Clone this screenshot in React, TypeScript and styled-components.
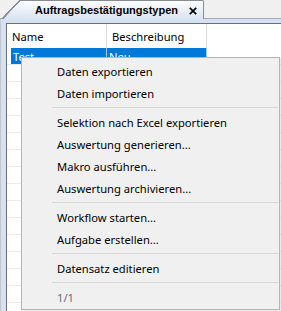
import styled, { createGlobalStyle } from "styled-components";

const Global = createGlobalStyle`
  html, body {
    margin: 0;
    padding: 0;
    background: #f0f0f0;
    overflow: hidden;
  }
  body {
    font-family: "Noto Sans", "Open Sans", sans-serif;
    font-size: 11.2px;
  }
`;

const Window = styled.div`
  width: 281px;
  height: 311px;
  display: flex;
  flex-direction: column;
  position: relative;
  overflow: hidden;
`;

const TabStrip = styled.div`
  height: 20px;
  display: flex;
  align-items: flex-end;
  border-bottom: 1px solid #a5a9b1;
  padding-left: 20px;
`;

const Tab = styled.div`
  position: relative;
  height: 18px;
  margin-bottom: -1px;
  padding: 0 6px 0 15px;
  display: flex;
  align-items: center;
  gap: 11px;
  border-top: 1px solid #868a93;
  border-right: 1px solid #868a93;
  border-top-right-radius: 2px;
  background: linear-gradient(to bottom, #fcfdfe, #d9e4f3);
  font-family: "Liberation Sans", Arial, sans-serif;
  font-weight: bold;
  font-size: 11px;
  color: #000;

  &::before {
    content: "";
    position: absolute;
    left: -18px;
    top: -1px;
    width: 18px;
    height: 19px;
    background: linear-gradient(
        to bottom right,
        #f0f0f0 47%,
        #868a93 48%,
        #868a93 53%,
        transparent 54%
      ),
      linear-gradient(to bottom, #fcfdfe, #d9e4f3);
  }
`;

const Close = styled.svg`
  width: 8px;
  height: 8px;
  margin-top: 1px;
`;

const Frame = styled.div`
  flex: 1;
  display: flex;
  background: #d6e2f2;
  border-left: 1px solid #c4c8cf;
  padding: 4px 0 0 5px;
`;

const Panel = styled.div`
  flex: 1;
  background: #fff;
  border-left: 1px solid #6b6e74;
  border-top: 1px solid #6b6e74;
`;

const Header = styled.div`
  display: flex;
  height: 24px;
`;

const HeadCell = styled.div`
  width: 94px;
  padding-left: 5px;
  border-right: 1px solid #dadada;
  display: flex;
  align-items: center;
  color: #000;
`;

const Row = styled.div`
  display: flex;
  height: 16px;
  padding-left: 4px;
  border-bottom: 1px solid #ececec;
`;

const Cell = styled.div<{ $selected?: boolean; $width: number }>`
  width: ${(p) => p.$width}px;
  padding-left: 2px;
  display: flex;
  align-items: center;
  border-right: 1px solid ${(p) => (p.$selected ? "#9cc7ef" : "transparent")};
  background: ${(p) => (p.$selected ? "#0078d7" : "transparent")};
  color: ${(p) => (p.$selected ? "#fff" : "#000")};
  white-space: nowrap;
  overflow: hidden;
`;

const Menu = styled.div`
  position: absolute;
  left: 21px;
  top: 57px;
  width: 257px;
  padding: 2px 0 1px;
  background: #f0f0f0;
  border: 1px solid #b4b4b4;
  box-shadow: 1px 1px 1px rgba(0, 0, 0, 0.08);
`;

const Item = styled.div<{ $disabled?: boolean }>`
  height: 22px;
  padding-left: 35px;
  display: flex;
  align-items: center;
  color: ${(p) => (p.$disabled ? "#6d6d6d" : "#000")};
  white-space: nowrap;
`;

const Separator = styled.div`
  height: 7px;
  display: flex;
  align-items: center;
  margin: 0 1px 0 30px;

  &::after {
    content: "";
    flex: 1;
    height: 1px;
    background: #d7d7d7;
  }
`;

const groups = [
  ["Daten exportieren", "Daten importieren"],
  [
    "Selektion nach Excel exportieren",
    "Auswertung generieren...",
    "Makro ausführen...",
    "Auswertung archivieren...",
  ],
  ["Workflow starten...", "Aufgabe erstellen..."],
  ["Datensatz editieren"],
];

export default function App() {
  return (
    <Window>
      <Global />
      <TabStrip>
        <Tab>
          Auftragsbestätigungstypen
          <Close viewBox="0 0 8 8">
            <path d="M0.8 0.8 L7.2 7.2 M7.2 0.8 L0.8 7.2" stroke="#000" strokeWidth="1.7" />
          </Close>
        </Tab>
      </TabStrip>
      <Frame>
        <Panel>
          <Header>
            <HeadCell>Name</HeadCell>
            <HeadCell>Beschreibung</HeadCell>
          </Header>
          <Row>
            <Cell $selected $width={93}>Test</Cell>
            <Cell $selected $width={97}>Neu</Cell>
          </Row>
          {Array.from({ length: 15 }).map((_, i) => (
            <Row key={i}>
              <Cell $width={93} />
              <Cell $width={97} />
            </Row>
          ))}
        </Panel>
      </Frame>
      <Menu>
        {groups.map((g, gi) => (
          <div key={gi}>
            {g.map((label) => (
              <Item key={label}>{label}</Item>
            ))}
            <Separator />
          </div>
        ))}
        <Item $disabled>1/1</Item>
      </Menu>
    </Window>
  );
}
